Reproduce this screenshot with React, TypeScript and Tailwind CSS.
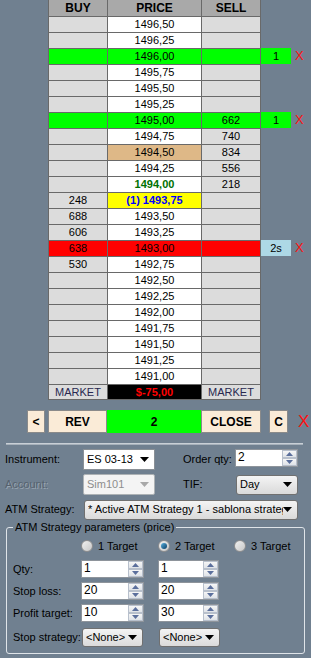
import React from 'react';

type BookRow = {
  price: string;
  buy?: string;
  sell?: string;
  fill?: string;
  priceBg?: string;
  priceText?: string;
  side?: { label: string; bg: string };
};

const book: BookRow[] = [
  { price: '1496,50' },
  { price: '1496,25' },
  { price: '1496,00', fill: 'bg-[#00ff00]', side: { label: '1', bg: 'bg-[#00ff00]' } },
  { price: '1495,75' },
  { price: '1495,50' },
  { price: '1495,25' },
  { price: '1495,00', sell: '662', fill: 'bg-[#00ff00]', side: { label: '1', bg: 'bg-[#00ff00]' } },
  { price: '1494,75', sell: '740' },
  { price: '1494,50', sell: '834', priceBg: 'bg-[#deb887]' },
  { price: '1494,25', sell: '556' },
  { price: '1494,00', sell: '218', priceText: 'font-bold text-[#007000]' },
  { price: '(1) 1493,75', buy: '248', priceBg: 'bg-[#ffff00]', priceText: 'font-bold text-[#0000ff]' },
  { price: '1493,50', buy: '688' },
  { price: '1493,25', buy: '606' },
  { price: '1493,00', buy: '638', fill: 'bg-[#ff0000]', side: { label: '2s', bg: 'bg-[#add8e6]' } },
  { price: '1492,75', buy: '530' },
  { price: '1492,50' },
  { price: '1492,25' },
  { price: '1492,00' },
  { price: '1491,75' },
  { price: '1491,50' },
  { price: '1491,25' },
  { price: '1491,00' },
];

function Arrow({ color = '#000' }: { color?: string }) {
  return (
    <svg width="9" height="5" viewBox="0 0 9 5">
      <polygon points="0,0 9,0 4.5,5" fill={color} />
    </svg>
  );
}

function SpinBtn({ up }: { up?: boolean }) {
  return (
    <div className="flex flex-1 items-center justify-center border border-[#b8c0cc] bg-gradient-to-b from-[#f6f6f6] to-[#dfe3e8]">
      <svg width="7" height="4" viewBox="0 0 7 4">
        <polygon points={up ? '0,4 7,4 3.5,0' : '0,0 7,0 3.5,4'} fill="#5b6f9c" />
      </svg>
    </div>
  );
}

function Spin({ value, className }: { value: string; className: string }) {
  return (
    <div className={`flex h-[18px] border border-[#8e949b] bg-white ${className}`}>
      <span className="flex-1 pl-[2px] text-[12px] leading-[15px] text-black">{value}</span>
      <div className="flex w-[15px] flex-col">
        <SpinBtn up />
        <SpinBtn />
      </div>
    </div>
  );
}

function Combo({ value, className }: { value: string; className: string }) {
  return (
    <div
      className={`flex items-center rounded-[3px] border border-[#707070] bg-gradient-to-b from-[#f4f4f4] to-[#dadada] pl-[3px] pr-[5px] ${className}`}
    >
      <span className="flex-1 overflow-hidden whitespace-nowrap text-[11px] text-black">{value}</span>
      <Arrow />
    </div>
  );
}

function Radio({ checked, label }: { checked?: boolean; label: string }) {
  return (
    <div className="flex items-center gap-[5px]">
      <span className="flex h-[12px] w-[12px] items-center justify-center rounded-full border border-[#8f8f8f] bg-gradient-to-br from-[#f0f0f0] to-[#c8c8c8]">
        {checked && <span className="h-[6px] w-[6px] rounded-full bg-gradient-to-br from-[#5ab2e0] to-[#0b3f66]" />}
      </span>
      <span className="text-[11px] text-black">{label}</span>
    </div>
  );
}

export default function App() {
  return (
    <div className="h-[658px] w-[311px] overflow-hidden bg-[#708090] font-['Liberation_Sans',Arial,sans-serif] text-[11px] text-black">
      {/* DOM header */}
      <div className="flex h-[16px]">
        <div className="ml-[48px] flex w-[213px] gap-px bg-[#696969] px-px">
          <div className="flex w-[58px] items-center justify-center bg-[#a9a9a9] text-[12px] font-bold">BUY</div>
          <div className="flex w-[93px] items-center justify-center bg-[#a9a9a9] text-[12px] font-bold">PRICE</div>
          <div className="flex w-[58px] items-center justify-center bg-[#a9a9a9] text-[12px] font-bold">SELL</div>
        </div>
      </div>

      {/* Price ladder */}
      {book.map((r) => (
        <div key={r.price} className="flex h-[16px]">
          <div className="ml-[48px] flex w-[213px] gap-px bg-[#696969] px-px pt-px">
            <div className={`flex w-[58px] items-center justify-center ${r.fill ?? 'bg-[#dcdcdc]'}`}>{r.buy}</div>
            <div
              className={`flex w-[93px] items-center justify-center ${r.fill ?? r.priceBg ?? 'bg-white'} ${r.priceText ?? ''}`}
            >
              {r.price}
            </div>
            <div className={`flex w-[58px] items-center justify-center ${r.fill ?? 'bg-[#dcdcdc]'}`}>{r.sell}</div>
          </div>
          {r.side && (
            <>
              <div className={`flex w-[30px] items-center justify-center ${r.side.bg}`}>{r.side.label}</div>
              <span className="ml-[4px] text-[13px] leading-[16px] text-[#ff1010]">X</span>
            </>
          )}
        </div>
      ))}

      <div className="flex h-[16px]">
        <div className="ml-[48px] flex w-[213px] gap-px bg-[#696969] px-px py-px">
          <div className="flex w-[58px] items-center justify-center bg-[#dcdcdc] text-[#282850]">MARKET</div>
          <div className="flex w-[93px] items-center justify-center bg-black font-bold text-[#ff0000]">$-75,00</div>
          <div className="flex w-[58px] items-center justify-center bg-[#dcdcdc] text-[#282850]">MARKET</div>
        </div>
      </div>

      {/* Order buttons */}
      <div className="mt-[10px] flex h-[23px] items-stretch text-[12px] font-bold">
        <div className="ml-[27px] flex w-[18px] items-center justify-center border border-[#8a8a8a] bg-[#faebd7]">&lt;</div>
        <div className="ml-[3px] flex w-[59px] items-center justify-center border border-[#8a8a8a] bg-[#faebd7]">REV</div>
        <div className="flex w-[94px] items-center justify-center bg-[#00ff00]">2</div>
        <div className="flex w-[60px] items-center justify-center border border-[#8a8a8a] bg-[#faebd7]">CLOSE</div>
        <div className="ml-[8px] flex w-[19px] items-center justify-center border border-[#8a8a8a] bg-[#faebd7]">C</div>
        <span className="ml-[10px] text-[17px] font-normal leading-[23px] text-[#ff1010]">X</span>
      </div>

      <div className="ml-[6px] mt-[10px] h-[2px] w-[297px] border-t border-[#c8cfd6] bg-[#a7b1bb]" />

      {/* Order settings */}
      <div className="px-[5px]">
        <div className="mt-[4px] flex h-[21px] items-center">
          <span className="w-[78px]">Instrument:</span>
          <div className="flex h-[21px] w-[72px] items-center border border-[#8a9096] bg-white pl-[3px] pr-[5px]">
            <span className="flex-1 text-[11px]">ES 03-13</span>
            <Arrow />
          </div>
          <span className="ml-[28px] w-[52px]">Order qty:</span>
          <Spin value="2" className="w-[63px] self-start" />
        </div>

        <div className="mt-[4px] flex h-[21px] items-center">
          <span className="w-[78px] text-[#56626e] [text-shadow:1px_1px_0_#9aa6b2]">Account:</span>
          <div className="flex h-[21px] w-[72px] items-center rounded-[2px] border border-[#adb2b5] bg-[#f4f4f4] pl-[3px] pr-[5px]">
            <span className="flex-1 text-[11px] text-[#8d8d8d]">Sim101</span>
            <Arrow color="#a8a8a8" />
          </div>
          <span className="ml-[28px] w-[53px]">TIF:</span>
          <Combo value="Day" className="h-[20px] w-[62px]" />
        </div>

        <div className="mt-[4px] flex h-[21px] items-center">
          <span className="w-[79px]">ATM Strategy:</span>
          <Combo value="* Active ATM Strategy 1 - sablona strategie" className="h-[20px] w-[214px]" />
        </div>
      </div>

      {/* ATM strategy parameters */}
      <fieldset className="ml-[6px] w-[299px] rounded-[3px] border border-[#dfe4e9] pb-[6px] pl-[6px]">
        <legend className="px-[2px] leading-[15px]">ATM Strategy parameters (price)</legend>

        <div className="mt-[5px] flex h-[12px] items-center">
          <div className="ml-[68px] w-[77px]">
            <Radio label="1 Target" />
          </div>
          <div className="w-[76px]">
            <Radio checked label="2 Target" />
          </div>
          <Radio label="3 Target" />
        </div>

        {[
          ['Qty:', '1', '1'],
          ['Stop loss:', '20', '20'],
          ['Profit target:', '10', '30'],
        ].map(([label, a, b], i) => (
          <div key={label} className={`flex h-[18px] items-center ${i === 0 ? 'mt-[8px]' : 'mt-[4px]'}`}>
            <span className="w-[68px]">{label}</span>
            <Spin value={a} className="w-[63px]" />
            <Spin value={b} className="ml-[14px] w-[61px]" />
          </div>
        ))}

        <div className="mt-[6px] flex h-[19px] items-center">
          <span className="w-[69px]">Stop strategy:</span>
          <Combo value="<None>" className="h-[19px] w-[61px]" />
          <Combo value="<None>" className="ml-[16px] h-[19px] w-[61px]" />
        </div>
      </fieldset>
    </div>
  );
}
